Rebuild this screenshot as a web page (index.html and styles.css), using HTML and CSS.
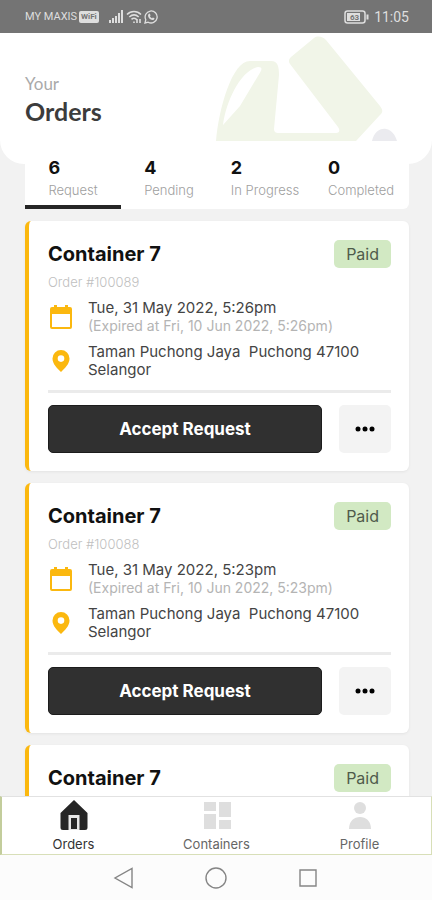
FILE: index.html
```
<!DOCTYPE html>
<html lang="en">
<head>
<meta charset="utf-8">
<meta name="viewport" content="width=device-width, initial-scale=1">
<title>Your Orders</title>
<link rel="stylesheet" href="styles.css">
</head>
<body>
<svg class="sprite" aria-hidden="true">
  <symbol id="calendar" viewBox="0 0 24 26">
    <path d="M3 3h2V1h3v2h8V1h3v2h2a2 2 0 0 1 2 2v18a2 2 0 0 1-2 2H3a2 2 0 0 1-2-2V5a2 2 0 0 1 2-2zM3 10v13h18V10z" fill="currentColor" fill-rule="evenodd"/>
  </symbol>
  <symbol id="pin" viewBox="0 0 24 26">
    <path d="M12 2a8.500 8.500 0 0 0-8.500 8.500C3.500 16 8 20 12 24c4-4 8.500-8 8.500-13.500A8.500 8.500 0 0 0 12 2zm0 5.300a3.300 3.300 0 1 1 0 6.600 3.300 3.300 0 0 1 0-6.600z" fill="currentColor" fill-rule="evenodd"/>
  </symbol>
  <symbol id="dots" viewBox="0 0 20 6">
    <circle cx="3" cy="3" r="2.500"/><circle cx="10" cy="3" r="2.500"/><circle cx="17" cy="3" r="2.500"/>
  </symbol>
</svg>

<div class="status">
  <div class="status-left">
    <span class="carrier">MY MAXIS</span>
    <span class="wifi-tag">WiFi</span>
    <svg class="signal" width="15" height="13" viewBox="0 0 15 13" fill="currentColor"><path d="M0 10h2v3H0zM3 8h2v5H3zM6 6h2v7H6zM9 3h2v10H9zM12 0h2v13h-2z"/></svg>
    <svg width="16" height="14" viewBox="0 0 16 14" fill="none" stroke="currentColor" stroke-width="1.600"><path d="M1 4.500c4-4 10-4 14 0M3.300 7c3-2.600 6.500-2.600 9.400 0M5.500 9.300c1.500-1.300 3.300-1.300 5 0M8 11.500v1.500M11 9v4M14 9v4"/></svg>
    <svg width="14" height="14" viewBox="0 0 14 14"><path d="M1 13l.8-3.300A6 6 0 1 1 4.200 12.200z" fill="none" stroke="currentColor" stroke-width="1.300"/><path d="M4.500 4l1.200-.4.900 1.700-.7.900c.5 1 1.200 1.600 2.100 2l.9-.8 1.600.9c0 1.200-1 1.900-2 1.800C6 9.800 4 7.500 4 5.500z" fill="currentColor"/></svg>
  </div>
  <div class="status-right">
    <svg width="25" height="14" viewBox="0 0 25 14"><rect x="1" y="1" width="20" height="12" rx="2.500" fill="none" stroke="currentColor" stroke-width="1.500"/><rect x="3" y="3" width="13" height="8" fill="currentColor"/><path d="M22.500 4.500h2v5h-2z" fill="currentColor"/><text class="battery-text" x="6" y="10">63</text></svg>
    <span>11:05</span>
  </div>
</div>

<main class="screen">
  <header class="hero">
    <svg class="hero-art" width="184" height="108" viewBox="0 0 184 108" aria-hidden="true">
      <path d="M0 108C3 75 16 28 34 28h21c7 0 8 6 8 14l-5 54c0 3 2 4 4 4h58c4 0 4-3 2-6L74 31c-2-3-1-5 1-7L98 5c4-3 9-1 12 2l54 66c3 4 3 6 0 9l-24 26z" fill="#f1f5e8"/>
      <path d="M7 92C10 68 25 37 42 34c6 0 3 4 0 9L24 73z" fill="#fff"/>
      <path d="M156 108c2-9 8-13 14-12 6 1 9 6 11 12z" fill="#ebebef"/>
    </svg>
    <p class="hero-kicker">Your</p>
    <h1 class="hero-title">Orders</h1>
  </header>

  <nav class="tabs" aria-label="Order status">
    <button class="tab tab-active" type="button"><span class="tab-body"><b>6</b><span>Request</span></span></button>
    <button class="tab" type="button"><span class="tab-body"><b>4</b><span>Pending</span></span></button>
    <button class="tab" type="button"><span class="tab-body"><b>2</b><span>In Progress</span></span></button>
    <button class="tab" type="button"><span class="tab-body"><b>0</b><span>Completed</span></span></button>
  </nav>

  <section class="orders">
    <article class="card">
      <div class="card-head"><h2>Container 7</h2><span class="badge">Paid</span></div>
      <p class="order-no">Order #100089</p>
      <div class="row"><svg class="icon"><use href="#calendar"/></svg><p>Tue, 31 May 2022, 5:26pm<br><span class="muted">(Expired at Fri, 10 Jun 2022, 5:26pm)</span></p></div>
      <div class="row"><svg class="icon"><use href="#pin"/></svg><p class="address">Taman Puchong Jaya  Puchong 47100 Selangor</p></div>
      <div class="actions"><button class="accept" type="button">Accept Request</button><button class="more" type="button" aria-label="More"><svg width="20" height="6"><use href="#dots"/></svg></button></div>
    </article>
    <article class="card">
      <div class="card-head"><h2>Container 7</h2><span class="badge">Paid</span></div>
      <p class="order-no">Order #100088</p>
      <div class="row"><svg class="icon"><use href="#calendar"/></svg><p>Tue, 31 May 2022, 5:23pm<br><span class="muted">(Expired at Fri, 10 Jun 2022, 5:23pm)</span></p></div>
      <div class="row"><svg class="icon"><use href="#pin"/></svg><p class="address">Taman Puchong Jaya  Puchong 47100 Selangor</p></div>
      <div class="actions"><button class="accept" type="button">Accept Request</button><button class="more" type="button" aria-label="More"><svg width="20" height="6"><use href="#dots"/></svg></button></div>
    </article>
    <article class="card">
      <div class="card-head"><h2>Container 7</h2><span class="badge">Paid</span></div>
    </article>
  </section>
</main>

<nav class="appbar" aria-label="Main">
  <a class="appbar-item appbar-active" href="#orders">
    <svg width="30" height="32" viewBox="0 0 30 32"><path d="M15 1L1.500 14v14.500A2.500 2.500 0 0 0 4 31h22a2.500 2.500 0 0 0 2.500-2.500V14z" fill="#262626"/><path d="M9.500 31V16h11v15z" fill="#e8e8e8"/><path d="M12 19h6v11h-6z" fill="#262626"/></svg>
    <span>Orders</span>
  </a>
  <a class="appbar-item" href="#containers">
    <svg width="30" height="32" viewBox="0 0 30 32" fill="#dedede"><path d="M2 3h12v9H2zM2 15h12v15H2zM17 3h12v15H17zM17 21h12v9H17z"/></svg>
    <span>Containers</span>
  </a>
  <a class="appbar-item" href="#profile">
    <svg width="30" height="32" viewBox="0 0 30 32" fill="#dedede"><circle cx="15" cy="9" r="6"/><path d="M4 30c0-8 5-12 11-12s11 4 11 12z"/></svg>
    <span>Profile</span>
  </a>
</nav>

<div class="sysnav">
  <button type="button" aria-label="Back"><svg width="22" height="22" viewBox="0 0 22 22"><path d="M19 1.500v19L2 11z"/></svg></button>
  <button type="button" aria-label="Home"><svg width="22" height="22" viewBox="0 0 22 22"><circle cx="11" cy="11" r="10"/></svg></button>
  <button type="button" aria-label="Recent"><svg width="22" height="22" viewBox="0 0 22 22"><path d="M3 3h16v16H3z"/></svg></button>
</div>
</body>
</html>
```
FILE: styles.css
```
* { box-sizing: border-box; }
h1, h2, p { margin: 0; }
button { border: 0; padding: 0; background: none; font: inherit; color: inherit; }

body {
  margin: 0;
  height: 100vh;
  display: flex;
  flex-direction: column;
  overflow: hidden;
  background: #f2f2f2;
  color: #444;
  font-family: Inter, "Liberation Sans", sans-serif;
}

.sprite { position: absolute; width: 0; height: 0; }

.status {
  flex: none;
  height: 33px;
  padding: 0 23px 0 25px;
  display: flex;
  align-items: center;
  justify-content: space-between;
  background: #747474;
  color: #dedede;
  font-family: Roboto, sans-serif;
}
.status-left, .status-right { display: flex; align-items: center; gap: 2px; }
.status-right { gap: 5px; font-size: 14px; }
.carrier { font-size: 11px; }
.wifi-tag {
  padding: 0 2px;
  border-radius: 2px;
  background: #dedede;
  color: #747474;
  font-size: 8px;
  font-weight: 700;
  line-height: 12px;
}
.signal { margin-left: 8px; }
.battery-text { font-size: 8px; font-weight: 700; fill: #747474; }

.screen { flex: 1; min-height: 0; overflow: hidden; }

.hero {
  position: relative;
  height: 131px;
  padding: 39px 25px 0;
  border-radius: 0 0 24px 24px;
  background: #fff;
  font-family: Lato, sans-serif;
}
.hero-art { position: absolute; right: 32px; top: 0; }
.hero-kicker { color: #aaa; font-size: 17px; line-height: 24px; }
.hero-title { position: relative; color: #3c3c3c; font-size: 25px; line-height: 30px; }

.tabs {
  position: relative;
  display: grid;
  grid-template-columns: repeat(4, 1fr);
  height: 68px;
  margin: -23px 23px 12px 25px;
  border-radius: 0 0 6px 0;
  overflow: hidden;
  background: #fff;
}
.tab { display: flex; justify-content: center; padding-top: 16px; border-bottom: 4px solid transparent; }
.tab-active { border-color: #262626; }
.tab-body { display: flex; flex-direction: column; text-align: left; color: #a0a0a0; font-size: 13px; font-weight: 300; line-height: 22px; }
.tab-body b { color: #111; font-size: 18px; font-weight: 700; }

.orders { display: grid; gap: 12px; margin: 0 23px 0 25px; }
.card {
  padding: 18px 18px 18px 19px;
  border-left: 4px solid #fbb80f;
  border-radius: 6px;
  background: #fff;
  box-shadow: 0 1px 3px #00000010;
}
.card-head { display: flex; align-items: center; justify-content: space-between; height: 30px; }
.card-head h2 { color: #111; font-size: 20px; font-weight: 700; }
.badge { padding: 0 12px; border-radius: 5px; background: #d2e9c3; color: #4f5b4b; font-size: 16px; line-height: 28px; }
.order-no { color: #c0c0c0; font-size: 13px; font-weight: 300; line-height: 20px; margin: 3px 0 7px; }
.row { display: flex; align-items: center; gap: 14px; margin-bottom: 8px; font-size: 15px; line-height: 18px; }
.row p { flex: 1; }
.icon { flex: none; width: 26px; height: 26px; color: #fbb80f; }
.muted { color: #b4b4b4; font-size: 14px; }
.address { white-space: pre-wrap; }
.actions { display: flex; gap: 17px; margin-top: 11px; padding-top: 12px; border-top: 3px solid #ebebeb; }
.accept { flex: 1; height: 48px; border: 1px solid #1c1c1c; border-radius: 5px; background: #303030; color: #fff; font-size: 17px; font-weight: 700; }
.more { width: 52px; height: 48px; border-radius: 5px; background: #f3f3f3; color: #111; }
.more svg { display: block; margin: 0 auto; }

.appbar {
  flex: none;
  height: 59px;
  display: grid;
  grid-template-columns: repeat(3, 1fr);
  border: 1px solid #d8dfb8;
  border-left: 2px solid #c3cd9c;
  border-top-color: #e2e2e2;
  background: #fff;
}
.appbar-item { display: flex; flex-direction: column; align-items: center; padding-top: 2px; color: #666; font-size: 13px; line-height: 26px; text-decoration: none; }
.appbar-item svg { flex: none; }
.appbar-active { color: #333; }

.sysnav { flex: none; height: 45px; display: flex; align-items: center; justify-content: center; gap: 70px; background: #fcfcfc; }
.sysnav svg { display: block; fill: none; stroke: #858585; stroke-width: 1.400; }
```
